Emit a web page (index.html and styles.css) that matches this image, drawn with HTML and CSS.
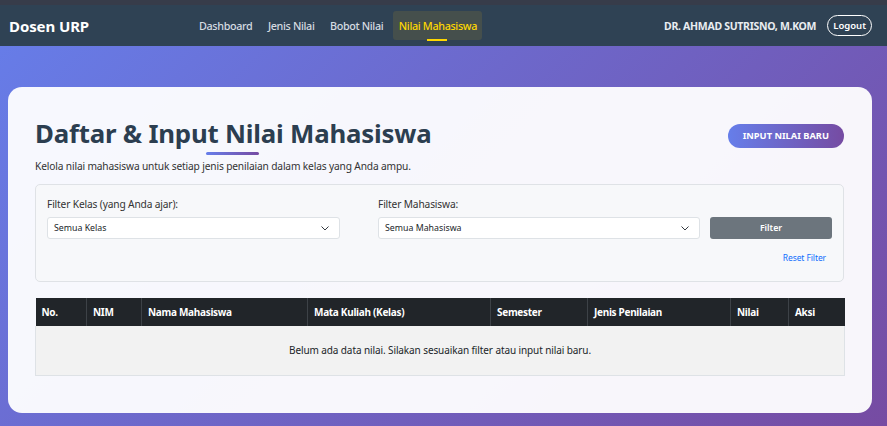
FILE: index.html
```html
<!DOCTYPE html>
<html lang="id">
<head>
<meta charset="utf-8">
<title>Nilai Mahasiswa</title>
<link rel="stylesheet" href="styles.css">
</head>
<body>
<div class="topstrip"></div>
<nav class="navbar">
  <div class="brand">Dosen URP</div>
  <ul class="nav-links">
    <li><a>Dashboard</a></li>
    <li><a>Jenis Nilai</a></li>
    <li><a>Bobot Nilai</a></li>
    <li><a class="active">Nilai Mahasiswa</a></li>
  </ul>
  <div class="user">
    <span class="user-name">DR. AHMAD SUTRISNO, M.KOM</span>
    <a class="logout">Logout</a>
  </div>
</nav>
<main class="page">
  <section class="card">
    <div class="card-head">
      <h1 class="title">Daftar &amp; Input Nilai Mahasiswa</h1>
      <a class="btn-new">INPUT NILAI BARU</a>
    </div>
    <p class="subtitle">Kelola nilai mahasiswa untuk setiap jenis penilaian dalam kelas yang Anda ampu.</p>
    <div class="filter-box">
      <div class="filter-row">
        <div class="field f1">
          <label>Filter Kelas (yang Anda ajar):</label>
          <div class="select"><span>Semua Kelas</span><svg width="8" height="5" viewBox="0 0 8 5"><path d="M0.5 0.5l3.5 3.5 3.5-3.5" fill="none" stroke="#343a40" stroke-width="1"/></svg></div>
        </div>
        <div class="field f2">
          <label>Filter Mahasiswa:</label>
          <div class="select"><span>Semua Mahasiswa</span><svg width="8" height="5" viewBox="0 0 8 5"><path d="M0.5 0.5l3.5 3.5 3.5-3.5" fill="none" stroke="#343a40" stroke-width="1"/></svg></div>
        </div>
        <div class="field f3">
          <button class="btn-filter">Filter</button>
        </div>
      </div>
      <div class="reset-row"><a class="reset">Reset Filter</a></div>
    </div>
    <table class="grid">
      <thead>
        <tr>
          <th class="c1">No.</th>
          <th class="c2">NIM</th>
          <th class="c3">Nama Mahasiswa</th>
          <th class="c4">Mata Kuliah (Kelas)</th>
          <th class="c5">Semester</th>
          <th class="c6">Jenis Penilaian</th>
          <th class="c7">Nilai</th>
          <th class="c8">Aksi</th>
        </tr>
      </thead>
      <tbody>
        <tr><td colspan="8" class="empty">Belum ada data nilai. Silakan sesuaikan filter atau input nilai baru.</td></tr>
      </tbody>
    </table>
  </section>
</main>
</body>
</html>
```

FILE: styles.css
```css
* { box-sizing: border-box; }
html, body { margin: 0; padding: 0; }
body {
  font-family: "Noto Sans", "Open Sans", sans-serif;
  background: linear-gradient(135deg, #667eea 0%, #764ba2 100%);
  height: 426px;
  overflow: hidden;
  color: #333;
}
.topstrip { height: 5px; background: #373c4a; }
.navbar {
  height: 41px;
  background: #2f4254;
  display: flex;
  align-items: center;
  padding: 0 15px 0 9px;
}
.brand { color: #fff; font-weight: 700; font-size: 15px; width: 184px; letter-spacing: -0.1px; }
.nav-links { list-style: none; margin: 0; padding: 0; display: flex; gap: 3.5px; flex: 1; }
.nav-links a {
  display: block; color: #d5dbe1; font-size: 10.8px; font-weight: 500;
  padding: 7px 6px; border-radius: 3px; position: relative; letter-spacing: -0.35px;
}
.nav-links a.active { background: #454f4c; color: #ffd700; padding: 7px 5px 7px 6px; }
.nav-links a.active::after {
  content: ""; position: absolute; left: 50%; bottom: -1px; width: 20px; height: 2px;
  margin-left: -10px; background: #ffd700;
}
.user { display: flex; align-items: center; gap: 11px; }
.user-name { color: #e9edf1; font-size: 10.5px; font-weight: 700; letter-spacing: -0.3px; }
.logout {
  color: #fff; font-size: 9.5px; font-weight: 600; border: 1px solid #fff; border-radius: 11px;
  padding: 3px 5px; line-height: 13px;
}
.page { padding: 41px 15px 0 8px; }
.card {
  background: rgba(255,255,255,0.95);
  border-radius: 14px;
  height: 326px;
  padding: 24px 28px 0 27px;
}
.card-head { display: flex; justify-content: space-between; align-items: flex-start; padding-top: 6px; }
.title {
  margin: 0; font-size: 25.8px; font-weight: 700; color: #2c3e50; position: relative;
  line-height: 32px; letter-spacing: -0.2px;
}
.title::after {
  content: ""; position: absolute; left: 50%; bottom: -6px; width: 53px; height: 3px; margin-left: -27px;
  background: linear-gradient(90deg, #667eea, #764ba2); border-radius: 2px;
}
.btn-new {
  background: linear-gradient(90deg, #667eea, #764ba2); color: #fff; font-weight: 700; font-size: 9.3px;
  border-radius: 13px; padding: 0 15px; height: 24px; line-height: 24px;
  margin-top: 7px;
}
.subtitle { margin: 10px 0 0 0; font-size: 10.2px; line-height: 14px; color: #333; letter-spacing: -0.15px; }
.filter-box {
  margin-top: 11px;
  border: 1px solid #dfe2e6; border-radius: 5px; background: #f7f8fa;
  height: 98px; padding: 12px 11px 0 11px;
}
.filter-row { display: flex; }
.field label { display: block; font-size: 10.2px; color: #333; line-height: 14px; margin-bottom: 6px; letter-spacing: -0.15px; }
.f1 { width: 331px; }
.f1 .select { width: 293px; }
.f2 { width: 332px; }
.f2 .select { width: 322px; }
.f3 { padding-top: 20px; }
.select {
  height: 22px; background: #fff; border: 1px solid #dee2e6; border-radius: 3px;
  display: flex; align-items: center; justify-content: space-between; padding: 0 10px 0 6px;
  font-size: 8.8px; color: #212529;
}
.btn-filter {
  width: 122px; height: 22px; background: #6c757d; color: #fff; border: 0; border-radius: 3px;
  font-family: inherit; font-size: 8.8px; font-weight: 600; padding: 0; display: block;
}
.reset-row { display: flex; justify-content: flex-end; padding-right: 6px; margin-top: 13px; }
.reset { color: #0d6efd; font-size: 8.5px; letter-spacing: -0.1px; }
.grid {
  margin-top: 16px; width: 809px; border-collapse: collapse; table-layout: fixed;
}
.grid th {
  background: #212529; color: #fff; font-size: 10px; font-weight: 700; text-align: left;
  height: 28px; padding: 0 6px; border-left: 1px solid #3d4247; letter-spacing: -0.3px;
}
.grid th:first-child { border-left: 0; }
.c1 { width: 51px; } .c2 { width: 55px; } .c3 { width: 166px; } .c4 { width: 183px; }
.c5 { width: 97px; } .c6 { width: 143px; } .c7 { width: 58px; } .c8 { width: 56px; }
.grid td.empty {
  background: #f2f2f2; text-align: center; height: 49px; font-size: 10px; color: #212529;
  border: 1px solid #dee2e6; border-top: 0; letter-spacing: -0.1px;
}
```
